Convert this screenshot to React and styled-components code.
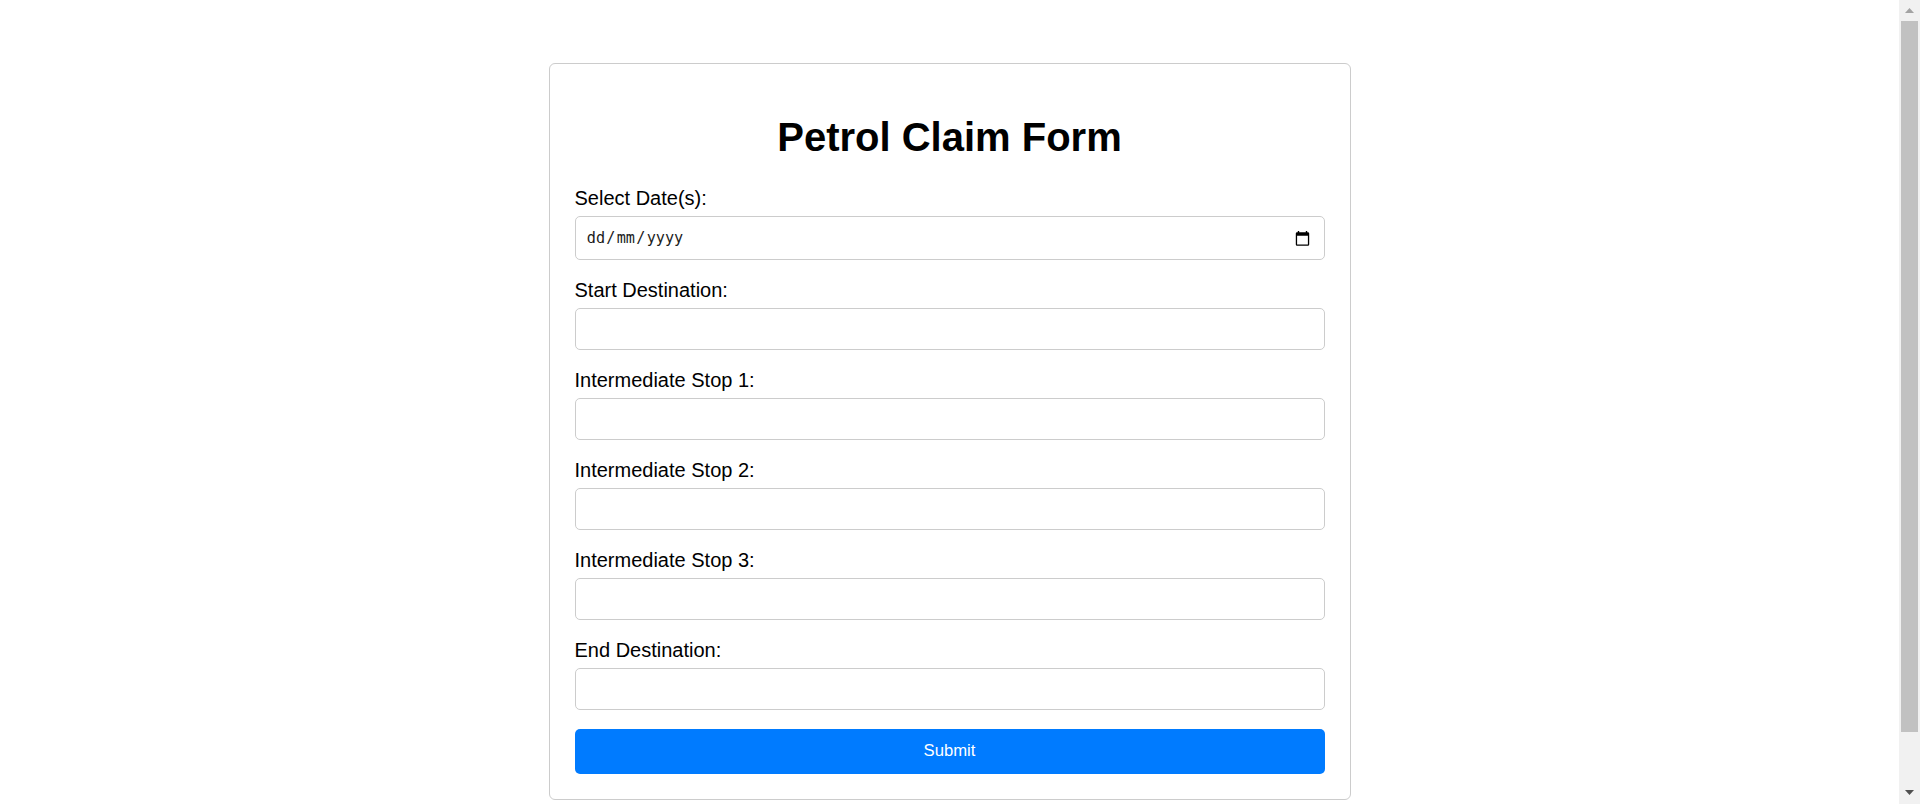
import React from "react";
import styled, { createGlobalStyle } from "styled-components";

const GlobalStyle = createGlobalStyle`
  *, *::before, *::after { box-sizing: border-box; }
  body {
    margin: 0;
    background: #fff;
    color: #000;
    font-family: "Liberation Sans", Arial, sans-serif;
    overflow: hidden;
  }
`;

const Viewport = styled.div`
  display: flex;
  height: 804px;
`;

const Page = styled.main`
  flex: 1;
  display: flex;
  justify-content: center;
  align-items: flex-start;
  padding-top: 63px;
`;

const Card = styled.form`
  width: 802px;
  height: 737px;
  padding: 50px 25px 0;
  border: 1px solid #ccc;
  border-radius: 6px;
`;

const Title = styled.h1`
  margin: 0 0 27px;
  font-size: 40px;
  line-height: 46px;
  text-align: center;
`;

const Field = styled.div`
  margin-bottom: 19px;
`;

const Label = styled.label`
  display: block;
  margin-bottom: 6px;
  font-size: 20px;
  line-height: 23px;
`;

const Input = styled.input`
  display: block;
  width: 100%;
  height: 42px;
  padding: 0 12px;
  border: 1px solid #ccc;
  border-radius: 5px;
  background: #fff;
  font: 16.67px "Liberation Sans", Arial, sans-serif;
  outline: none;
`;

const DateBox = styled.div`
  display: flex;
  align-items: center;
  justify-content: space-between;
  height: 44px;
  padding: 0 14px 0 10px;
  border: 1px solid #ccc;
  border-radius: 5px;
`;

const DateText = styled.span`
  display: flex;
  color: #1c1c1c;
  font: 15.2px/20px "DejaVu Sans Mono", monospace;
`;

const DatePart = styled.span`
  padding: 0 1.25px;
`;

const Submit = styled.button`
  display: block;
  width: 100%;
  height: 45px;
  padding: 0 0 2px;
  border: 0;
  border-radius: 5px;
  background: #007bff;
  color: #fff;
  font: 16.67px "Liberation Sans", Arial, sans-serif;
`;

const ScrollTrack = styled.div`
  display: flex;
  flex-direction: column;
  align-items: center;
  width: 21px;
  background: #f1f1f1;
`;

const ScrollButton = styled.div`
  display: flex;
  align-items: center;
  justify-content: center;
  width: 100%;
  height: 21px;
  padding-bottom: ${({ $raised }) => ($raised ? "2px" : "0")};
`;

const ScrollThumb = styled.div`
  width: 17px;
  height: 711px;
  margin-bottom: auto;
  background: #c1c1c1;
`;

const CalendarIcon = () => (
  <svg width="15" height="15" viewBox="0 0 15 15" aria-hidden="true">
    <path
      fill="#000"
      fillRule="evenodd"
      d="M2.8 0h1.4v1.3h6.6V0h1.4v1.3h.7A1.3 1.3 0 0 1 14.2 2.6v10.9a1.3 1.3 0 0 1-1.3 1.3H2.1a1.3 1.3 0 0 1-1.3-1.3V2.6a1.3 1.3 0 0 1 1.3-1.3h.7ZM2.1 4.7v8.8h10.8V4.7Z"
    />
  </svg>
);

const stops = [
  "Start Destination:",
  "Intermediate Stop 1:",
  "Intermediate Stop 2:",
  "Intermediate Stop 3:",
  "End Destination:",
];

export default function App() {
  return (
    <>
      <GlobalStyle />
      <Viewport>
        <Page>
          <Card onSubmit={(event) => event.preventDefault()}>
            <Title>Petrol Claim Form</Title>
            <Field>
              <Label>Select Date(s):</Label>
              <DateBox>
                <DateText>
                  <DatePart>dd</DatePart>/<DatePart>mm</DatePart>/
                  <DatePart>yyyy</DatePart>
                </DateText>
                <CalendarIcon />
              </DateBox>
            </Field>
            {stops.map((label, index) => (
              <Field key={label}>
                <Label htmlFor={`stop-${index}`}>{label}</Label>
                <Input id={`stop-${index}`} type="text" />
              </Field>
            ))}
            <Submit type="submit">Submit</Submit>
          </Card>
        </Page>
        <ScrollTrack>
          <ScrollButton>
            <svg width="9" height="5" viewBox="0 0 9 5">
              <path d="M4.5 0 9 5H0Z" fill="#a3a3a3" />
            </svg>
          </ScrollButton>
          <ScrollThumb />
          <ScrollButton $raised>
            <svg width="9" height="5" viewBox="0 0 9 5">
              <path d="M0 0h9L4.5 5Z" fill="#505050" />
            </svg>
          </ScrollButton>
        </ScrollTrack>
      </Viewport>
    </>
  );
}
